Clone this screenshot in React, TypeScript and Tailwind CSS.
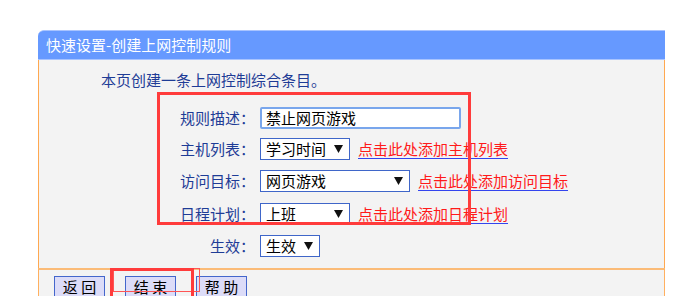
const Arrow = () => (
  <svg width="9" height="8" viewBox="0 0 9 8" className="shrink-0">
    <polygon points="0,0 9,0 4.5,8" fill="#111" />
  </svg>
);

function Select({ value, width }: { value: string; width: string }) {
  return (
    <div
      className={`flex h-[22px] items-center justify-between border border-[#3f66c9] bg-white pl-[5px] pr-[6px] text-black ${width}`}
    >
      <span>{value}</span>
      <Arrow />
    </div>
  );
}

function Link({ text }: { text: string }) {
  return (
    <span className="ml-[8px] text-[#ff1a1a] underline decoration-[#3344ee] underline-offset-[3px]">
      {text}
    </span>
  );
}

function Row({
  label,
  height,
  children,
}: {
  label: string;
  height: string;
  children: React.ReactNode;
}) {
  return (
    <div className={`flex items-center ${height}`}>
      <div className="w-[216px] text-right text-[#1e3c96]">{label}</div>
      <div className="ml-[5px] flex items-center">{children}</div>
    </div>
  );
}

export default function App() {
  return (
    <div className="h-[296px] w-[686px] overflow-hidden bg-white font-['Noto_Sans_CJK_SC',sans-serif] text-[15px] leading-[20px]">
      <div className="ml-[38px] mt-[30px] w-[627px]">
        <div className="flex h-[30px] items-center rounded-tl-[6px] border-y border-[#a9c4ff] bg-[#6699ff] pl-[8px] text-white">
          快速设置-创建上网控制规则
        </div>

        <div className="relative border-x border-[#ffa850] bg-[#f3f3f3] pb-[6px] pt-[10px]">
          <div className="pl-[62px] text-[#1e3c96]">本页创建一条上网控制综合条目。</div>

          <div className="mt-[12px]">
            <Row label="规则描述：" height="h-[31px]">
              <div className="flex h-[22px] w-[201px] items-center rounded-[2px] border-2 border-[#79a6ec] bg-white pl-[4px] text-black">
                禁止网页游戏
              </div>
            </Row>
            <Row label="主机列表：" height="h-[31px]">
              <Select value="学习时间" width="w-[90px]" />
              <Link text="点击此处添加主机列表" />
            </Row>
            <Row label="访问目标：" height="h-[33px]">
              <Select value="网页游戏" width="w-[150px]" />
              <Link text="点击此处添加访问目标" />
            </Row>
            <Row label="日程计划：" height="h-[33px]">
              <Select value="上班" width="w-[90px]" />
              <Link text="点击此处添加日程计划" />
            </Row>
            <Row label="生效：" height="h-[32px]">
              <Select value="生效" width="w-[60px]" />
            </Row>
          </div>

          <div className="pointer-events-none absolute left-[118px] top-[32px] h-[133px] w-[314px] border-[3px] border-[#ff3b3b]" />
        </div>

        <div className="relative flex h-[30px] gap-[20px] border-x border-t-2 border-[#ffb060] border-t-[#fbbb77] bg-[#f3f3f3] pl-[15px] pt-[6px]">
          {["返 回", "结 束", "帮 助"].map((t) => (
            <div
              key={t}
              className="flex h-[24px] w-[51px] items-start justify-center border border-[#4466cc] bg-[#dcdcf8] pt-[1px] leading-[17px] text-black"
            >
              {t}
            </div>
          ))}
          <div className="pointer-events-none absolute left-[74px] top-[-2px] h-[24px] w-[87px] border border-[#ff5555]" />
          <div className="pointer-events-none absolute left-[71px] top-[-2px] h-[40px] w-[84px] border-[3px] border-[#ff3b3b]" />
        </div>
      </div>
    </div>
  );
}
